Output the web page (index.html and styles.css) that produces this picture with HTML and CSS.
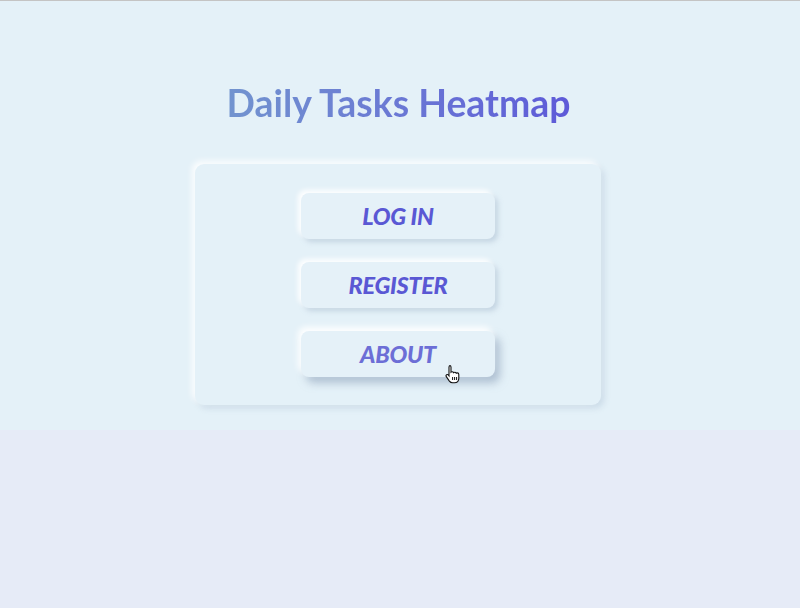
FILE: index.html
```html
<!DOCTYPE html>
<html>
<head>
<meta charset="utf-8">
<link rel="stylesheet" href="styles.css">
</head>
<body>
<div class="topline"></div>
<main class="page">
  <h1 class="title">Daily Tasks Heatmap</h1>
  <div class="card">
    <button class="btn">LOG IN</button>
    <button class="btn">REGISTER</button>
    <button class="btn hover">ABOUT
      <svg class="cursor" width="16" height="20" viewBox="0 0 16 20">
        <path d="M4.5 1.5c.8 0 1.5.7 1.5 1.5v5.2c.3-.3.8-.5 1.2-.5.7 0 1.2.4 1.4 1 .3-.3.7-.5 1.2-.5.7 0 1.2.4 1.4 1 .3-.2.6-.3 1-.3 1 0 1.6.7 1.6 1.600v3.8c0 2.6-1.8 4.5-4.4 4.5H7.6c-1.4 0-2.4-.6-3.2-1.7L1.3 12.6c-.4-.6-.3-1.4.3-1.8.6-.4 1.3-.3 1.7.2l.7.9V3c0-.8.7-1.5 1.5-1.5z" fill="#fff" stroke="#111" stroke-width="1.1"/>
        <path d="M7.6 13v3M9.6 13v3M11.6 13v3" stroke="#111" stroke-width="1"/>
      </svg>
    </button>
  </div>
</main>
</body>
</html>
```

FILE: styles.css
```css
html {
  background: #e6ebf7;
}
body {
  margin: 0;
  font-family: Lato, "Liberation Sans", sans-serif;
}
.topline {
  height: 1px;
  background: #c4c4c4;
}
.page {
  height: 429px;
  background: #e4f1f8;
  display: flex;
  flex-direction: column;
  align-items: center;
  padding-top: 1px;
  box-sizing: border-box;
}
.title {
  margin: 78px 0 0;
  font-size: 37.4px;
  line-height: 46px;
  font-weight: 700;
  margin-left: -3px;
  background: linear-gradient(90deg, #7294cf 0%, #6a78d4 50%, #5d5ad8 100%);
  -webkit-background-clip: text;
  background-clip: text;
  color: transparent;
}
.card {
  margin-top: 38px;
  margin-left: -4px;
  width: 406px;
  height: 241px;
  box-sizing: border-box;
  padding-top: 29px;
  border-radius: 9px;
  background: #e4f1f8;
  box-shadow: -3px -3px 6px rgba(255, 255, 255, 0.9), 3px 3px 6px rgba(170, 190, 210, 0.45);
  display: flex;
  flex-direction: column;
  align-items: center;
  gap: 23px;
}
.btn {
  position: relative;
  width: 194px;
  height: 46px;
  border: none;
  border-radius: 8px;
  background: #e5f1f8;
  box-shadow: -3px -3px 5px rgba(255, 255, 255, 0.95), 3px 3px 5px rgba(165, 185, 205, 0.5);
  font-family: Lato, "Liberation Sans", sans-serif;
  font-style: italic;
  font-weight: 900;
  font-size: 23.5px;
  color: #5a58d4;
  padding: 0;
  letter-spacing: -0.3px;
}
.btn.hover {
  color: #6c6ed6;
  box-shadow: -3px -4px 6px rgba(255, 255, 255, 0.95), 5px 6px 8px rgba(140, 160, 185, 0.6);
}
.cursor {
  position: absolute;
  left: 144px;
  top: 33px;
}
```
